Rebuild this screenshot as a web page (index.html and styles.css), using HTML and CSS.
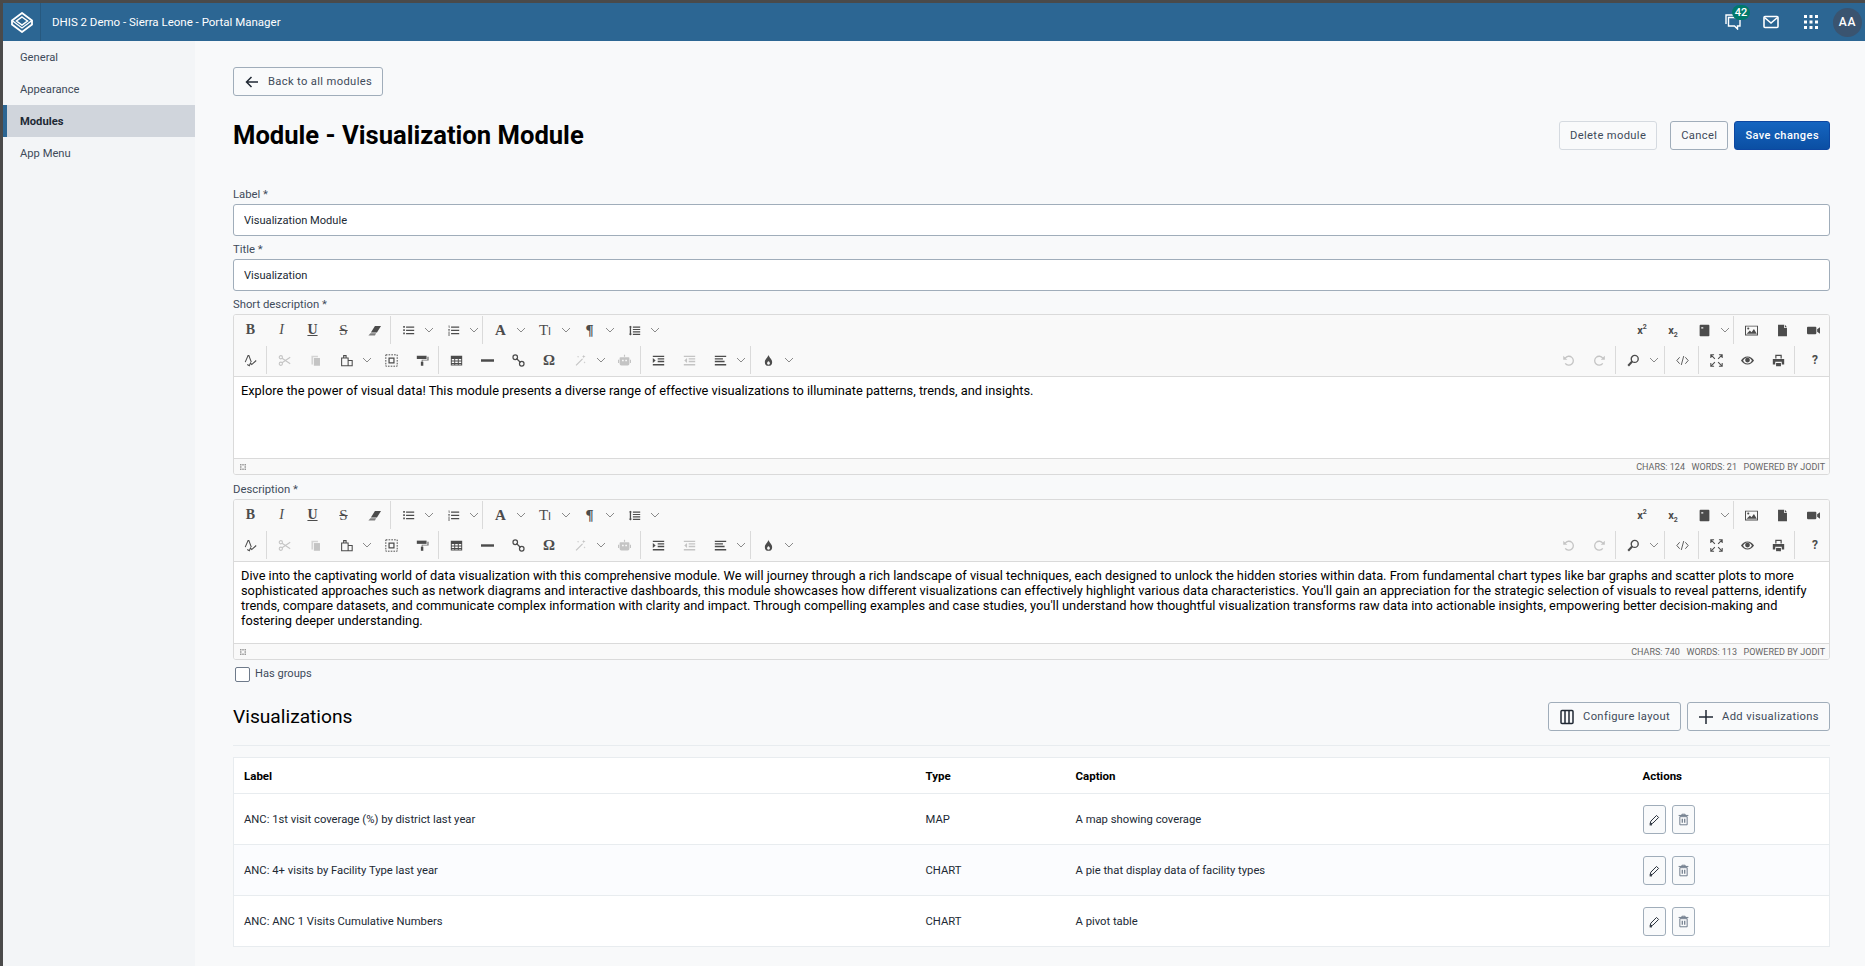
FILE: index.html
```html
<!DOCTYPE html>
<html lang="en">
<head>
  <meta charset="UTF-8"/>
  <meta name="viewport" content="width=device-width, initial-scale=1.0"/>
  <title>Portal Manager</title>
  <link rel="stylesheet" href="styles.css">
</head>
<body>

  <!-- icon sheet, everything below points here with <use> -->
  <svg class="sprite" width="0" height="0">
    <symbol id="i-chev" viewBox="0 0 10 10"><path d="M1 3l4 4 4-4" fill="none" stroke="currentColor" stroke-width="1"/></symbol>
    <symbol id="i-eraser" viewBox="0 0 16 16"><path d="M8.500 2.500H16l-5 8H3.500z"/><path d="M3 11.500h7l-1.500 2.500H.5z" opacity=".7"/></symbol>
    <symbol id="i-ul" viewBox="0 0 16 16"><path d="M5 3h10v1.500H5zM5 7h10v1.500H5zM5 11h10v1.500H5z"/><path d="M1.500 2.500h2v2h-2zM1.500 6.500h2v2h-2zM1.500 10.500h2v2h-2z"/></symbol>
    <symbol id="i-ol" viewBox="0 0 16 16"><path d="M5 3h10v1.500H5zM5 7h10v1.500H5zM5 11h10v1.500H5z"/><path d="M1.500 2h2v.8h-2zM2 3.500h1.500v.8H2zM1.500 6.500h2v.8h-2zM1.500 8h2v.8h-2zM1.500 10.500h2v.8h-2zM1.500 12h2v.8h-2zM1.500 13.500h2v.8h-2z"/></symbol>
    <symbol id="i-lines" viewBox="0 0 16 16"><path d="M6 3h9v1.500H6zM6 6h9v1.500H6zM6 9h9v1.500H6zM6 12h9v1.500H6z"/><path d="M2.200 3h1.600v10H2.200z"/><path d="M1 4l2-2 2 2zM1 12l2 2 2-2z"/></symbol>
    <symbol id="i-spell" viewBox="0 0 16 16"><path d="M1.500 10L5 2h1l3 8" fill="none" stroke="currentColor" stroke-width="1.300"/><path d="M4 13l2.500 1.500L8 11l1.500 2L15 8" fill="none" stroke="currentColor" stroke-width="1.300"/></symbol>
    <symbol id="i-cut" viewBox="0 0 16 16" fill="none" stroke="currentColor" stroke-width="1.300"><circle cx="3.500" cy="4" r="2"/><circle cx="3.500" cy="12" r="2"/><path d="M5 5.200L15 12M5 10.800L15 4"/></symbol>
    <symbol id="i-copy" viewBox="0 0 16 16"><path d="M3 2h8v2H5v9H3z" opacity=".7"/><path d="M6 5h7.500v9.500H6z"/></symbol>
    <symbol id="i-paste" viewBox="0 0 16 16" fill="none" stroke="currentColor" stroke-width="1.300"><path d="M2 5h8v9.500H2zM10 8h5v6.500h-5z"/><path d="M4.500 5V2h3v3"/></symbol>
    <symbol id="i-select" viewBox="0 0 16 16"><path d="M5 5h6v6H5z" fill="none" stroke="currentColor" stroke-width="1.500"/><path d="M1 1h14v14H1z" fill="none" stroke="currentColor" stroke-width="1.200" stroke-dasharray="2 1.400"/></symbol>
    <symbol id="i-paint" viewBox="0 0 16 16"><path d="M1 2h12v4H1z"/><path d="M14 3.500h1.500V8H8v2H7V7h7z" opacity=".8"/><path d="M6 9.500h3v5H6z"/></symbol>
    <symbol id="i-table" viewBox="0 0 16 16"><path d="M1 2h14v12H1zM2.200 6v2h3V6zm4.200 0v2h3.200V6zm4.400 0v2h3V6zM2.200 9.200v2h3v-2zm4.200 0v2h3.200v-2zm4.400 0v2h3v-2zM2.200 12.400v.6h3v-.6zm4.200 0v.6h3.200v-.6zm4.400 0v.6h3v-.6z" fill-rule="evenodd"/></symbol>
    <symbol id="i-hr" viewBox="0 0 16 16"><path d="M0 6.500h16v3H0z"/></symbol>
    <symbol id="i-link" viewBox="0 0 16 16" fill="none" stroke="currentColor" stroke-width="1.500"><circle cx="4" cy="4" r="2.800"/><circle cx="12" cy="12" r="2.800"/><path d="M5.500 5.500l5 5"/></symbol>
    <symbol id="i-wand" viewBox="0 0 16 16"><path d="M2 13.500l8-8 1 1-8 8z"/><path d="M12 1l.6 1.600 1.600.6-1.600.6L12 5.400l-.6-1.600-1.600-.6 1.600-.6zM5 2l.4 1 1 .4-1 .4-.4 1-.4-1-1-.4 1-.4zM13 9l.4 1 1 .4-1 .4-.4 1-.4-1-1-.4 1-.4z"/></symbol>
    <symbol id="i-robot" viewBox="0 0 16 16"><path d="M7.300 1h1.400v2.500H7.300z"/><path d="M3 4h10a1 1 0 0 1 1 1v7a2 2 0 0 1-2 2H4a2 2 0 0 1-2-2V5a1 1 0 0 1 1-1zm2 3v2h2V7zm4 0v2h2V7z" fill-rule="evenodd"/><path d="M0 7h1.400v4H0zM14.600 7H16v4h-1.400z"/></symbol>
    <symbol id="i-indent" viewBox="0 0 16 16"><path d="M1 2h14v1.600H1zM7 5.200h8v1.600H7zM7 8.400h8V10H7zM1 12.400h14V14H1z"/><path d="M1 5l3.500 3L1 11z"/></symbol>
    <symbol id="i-outdent" viewBox="0 0 16 16"><path d="M1 2h14v1.600H1zM7 5.200h8v1.600H7zM7 8.400h8V10H7zM1 12.400h14V14H1z"/><path d="M5 5L1.500 8 5 11z"/></symbol>
    <symbol id="i-align" viewBox="0 0 16 16"><path d="M1 2h14v1.600H1zM1 5.200h10v1.600H1zM1 8.400h12V10H1zM1 12.400h14V14H1z"/></symbol>
    <symbol id="i-drop" viewBox="0 0 16 16"><path d="M8 1c.5 3 4.500 5.500 4.500 9a4.500 4.500 0 0 1-9 0C3.500 6.500 7.500 4 8 1zM8 8.500c-1 1-1.800 2-1.800 3a1.800 1.800 0 0 0 3.600 0c0-1-.8-2-1.800-3z" fill-rule="evenodd"/></symbol>
    <symbol id="i-book" viewBox="0 0 16 16"><path d="M3 1h10a1 1 0 0 1 1 1v12a1 1 0 0 1-1 1H3a1 1 0 0 1-1-1V2a1 1 0 0 1 1-1zm1 3v1.500h2.500V4z" fill-rule="evenodd"/></symbol>
    <symbol id="i-image" viewBox="0 0 16 16"><path d="M0 2h16v12H0zm1.200 1.200v9.600h13.600V3.200z" fill-rule="evenodd"/><path d="M2 12l4-4 2 2 3-4 3.500 6z"/><circle cx="4" cy="5.500" r="1.300"/></symbol>
    <symbol id="i-file" viewBox="0 0 16 16"><path d="M2.500 1H10v4h3.500v10h-11zM11 1l2.500 3H11z"/></symbol>
    <symbol id="i-video" viewBox="0 0 16 16"><path d="M1 3.500h9.500a1 1 0 0 1 1 1v7a1 1 0 0 1-1 1H1a1 1 0 0 1-1-1v-7a1 1 0 0 1 1-1zM12.500 6.500L16 4v8l-3.500-2.500z"/></symbol>
    <symbol id="i-undo" viewBox="0 0 16 16"><path d="M4 5a5.500 5.500 0 1 1 0 6.500" fill="none" stroke="currentColor" stroke-width="1.600"/><path d="M1.500 2v5h5z"/></symbol>
    <symbol id="i-redo" viewBox="0 0 16 16"><path d="M12 5a5.500 5.500 0 1 0 0 6.500" fill="none" stroke="currentColor" stroke-width="1.600"/><path d="M14.500 2v5h-5z"/></symbol>
    <symbol id="i-search" viewBox="0 0 16 16" fill="none" stroke="currentColor"><circle cx="9.500" cy="6" r="4.300" stroke-width="1.700"/><path d="M6.300 9.200L1.500 14.500" stroke-width="2.500"/></symbol>
    <symbol id="i-code" viewBox="0 0 16 16" fill="none" stroke="currentColor" stroke-width="1.100"><path d="M4.500 4L1 8l3.500 4M11.500 4L15 8l-3.500 4M9.500 2.500l-3 11"/></symbol>
    <symbol id="i-expand" viewBox="0 0 16 16" fill="none" stroke="currentColor" stroke-width="1.300"><path d="M1 5V1h4M15 5V1h-4M1 11v4h4M15 11v4h-4M1.500 1.500l4.500 4.500M14.500 1.500L10 6M1.500 14.500L6 10M14.500 14.500L10 10"/></symbol>
    <symbol id="i-eye" viewBox="0 0 16 16"><path d="M8 3c3.500 0 6.500 2.500 8 5-1.500 2.500-4.500 5-8 5s-6.500-2.500-8-5c1.500-2.500 4.500-5 8-5zm0 1.200C5.500 4.200 3.500 6 2.600 8c.9 2 2.900 3.800 5.400 3.800S12.500 10 13.400 8C12.500 6 10.500 4.200 8 4.200z" fill-rule="evenodd"/><circle cx="8" cy="7.500" r="3"/></symbol>
    <symbol id="i-print" viewBox="0 0 16 16"><path d="M4 1h8v4.500h-1.500v-3h-5v3H4z"/><path d="M1 6h14v7h-3V9.500H4V13H1z"/><path d="M5 11h6v4H5z"/></symbol>
    <symbol id="i-pencil" viewBox="0 0 16 16" fill="none" stroke="currentColor" stroke-width="1.200"><path d="M3.500 10L10.500 3l2.500 2.500-7 7L2.500 13.500z"/><path d="M2 14.500h3" stroke-width="1.500"/></symbol>
    <symbol id="i-trash" viewBox="0 0 16 16" fill="none" stroke="currentColor" stroke-width="1.200"><path d="M3.500 4.500h9v10h-9zM2 3h12M6 3V1.500h4V3"/><path d="M6.500 7v5M9.500 7v5" stroke-width="1.500"/></symbol>
  </svg>

  <header class="topbar">
    <div class="logo">
      <svg width="22" height="21" viewBox="0 0 22 21" fill="none" stroke="#fff" stroke-width="1.800">
        <path d="M11 1l10 7.500v4L11 20 1 12.500v-4z"/>
        <path d="M11 5l5.500 4L11 13 5.500 9z" stroke-width="1.500"/>
        <path d="M1 8.500L11 16l10-7.500" stroke-width="1.300"/>
      </svg>
    </div>
    <div class="app-title">DHIS 2 Demo - Sierra Leone - Portal Manager</div>
    <div class="top-icons">
      <span class="top-icon msg">
        <svg width="16" height="16" viewBox="0 0 16 16" fill="none" stroke="#fff" stroke-width="1.400">
          <path d="M3.500 3.500H15v8.500h-2.500v3l-3-3h-6z"/>
          <path d="M1 10V1h10"/>
        </svg>
        <span class="badge">42</span>
      </span>
      <span class="top-icon mail">
        <svg width="16" height="14" viewBox="0 0 16 14" fill="none" stroke="#fff" stroke-width="1.600">
          <rect x="1" y="1.500" width="14" height="11" rx="1"/>
          <path d="M1.500 2.500L8 8l6.500-5.500"/>
        </svg>
      </span>
      <span class="top-icon apps">
        <svg width="14" height="14" viewBox="0 0 14 14" fill="#fff">
          <path d="M0 0h3v3H0zM5.500 0h3v3h-3zM11 0h3v3h-3zM0 5.500h3v3H0zM5.500 5.500h3v3h-3zM11 5.500h3v3h-3zM0 11h3v3H0zM5.500 11h3v3h-3zM11 11h3v3h-3z"/>
        </svg>
      </span>
      <span class="avatar">AA</span>
    </div>
  </header>

  <div class="layout">
    <nav class="sidebar">
      <a class="nav-item">General</a>
      <a class="nav-item">Appearance</a>
      <a class="nav-item active">Modules</a>
      <a class="nav-item">App Menu</a>
    </nav>

    <main class="content">
      <button class="btn back-btn">
        <svg width="16" height="16" viewBox="0 0 16 16" fill="none" stroke="currentColor" stroke-width="1.500"><path d="M14 8H2.500M7.500 3l-5 5 5 5"/></svg>
        Back to all modules
      </button>

      <div class="title-row">
        <h1>Module - Visualization Module</h1>
        <div class="title-actions">
          <button class="btn btn-muted">Delete module</button>
          <button class="btn cancel-btn">Cancel</button>
          <button class="btn btn-primary">Save changes</button>
        </div>
      </div>

      <div class="field">
        <label>Label *</label>
        <input class="text-input" type="text" value="Visualization Module"/>
      </div>
      <div class="field">
        <label>Title *</label>
        <input class="text-input" type="text" value="Visualization"/>
      </div>

      <div class="field field-editor">
        <label>Short description *</label>
        <div class="editor">
          <div class="toolbar">
            <div class="tb-row">
              <div class="tb-group">
                <span class="tb"><b class="g-serif">B</b></span>
                <span class="tb"><i class="g-serif">I</i></span>
                <span class="tb"><u class="g-serif g-bold">U</u></span>
                <span class="tb"><s class="g-serif g-big">S</s></span>
                <span class="tb"><svg class="ic"><use href="#i-eraser"/></svg></span>
              </div>
              <div class="tb-group">
                <span class="tb"><svg class="ic"><use href="#i-ul"/></svg></span><span class="tr"><svg><use href="#i-chev"/></svg></span>
                <span class="tb"><svg class="ic"><use href="#i-ol"/></svg></span><span class="tr"><svg><use href="#i-chev"/></svg></span>
              </div>
              <div class="tb-group last">
                <span class="tb"><b class="g-serif g-big">A</b></span><span class="tr"><svg><use href="#i-chev"/></svg></span>
                <span class="tb"><span class="g-serif g-big">T<small>I</small></span></span><span class="tr"><svg><use href="#i-chev"/></svg></span>
                <span class="tb"><b class="g-serif g-big">¶</b></span><span class="tr"><svg><use href="#i-chev"/></svg></span>
                <span class="tb"><svg class="ic"><use href="#i-lines"/></svg></span><span class="tr"><svg><use href="#i-chev"/></svg></span>
              </div>
              <div class="tb-group push">
                <span class="tb"><b class="g-sup">x<sup>2</sup></b></span>
                <span class="tb"><b class="g-sup">x<sub>2</sub></b></span>
                <span class="tb"><svg class="ic"><use href="#i-book"/></svg></span><span class="tr"><svg><use href="#i-chev"/></svg></span>
              </div>
              <div class="tb-group last">
                <span class="tb"><svg class="ic"><use href="#i-image"/></svg></span>
                <span class="tb"><svg class="ic"><use href="#i-file"/></svg></span>
                <span class="tb"><svg class="ic"><use href="#i-video"/></svg></span>
              </div>
            </div>
            <div class="tb-row">
              <div class="tb-group">
                <span class="tb"><svg class="ic"><use href="#i-spell"/></svg></span>
              </div>
              <div class="tb-group">
                <span class="tb off"><svg class="ic"><use href="#i-cut"/></svg></span>
                <span class="tb off"><svg class="ic"><use href="#i-copy"/></svg></span>
                <span class="tb"><svg class="ic"><use href="#i-paste"/></svg></span><span class="tr"><svg><use href="#i-chev"/></svg></span>
                <span class="tb"><svg class="ic"><use href="#i-select"/></svg></span>
                <span class="tb"><svg class="ic"><use href="#i-paint"/></svg></span>
              </div>
              <div class="tb-group">
                <span class="tb"><svg class="ic"><use href="#i-table"/></svg></span>
                <span class="tb"><svg class="ic"><use href="#i-hr"/></svg></span>
                <span class="tb"><svg class="ic"><use href="#i-link"/></svg></span>
                <span class="tb"><b class="g-serif g-big">Ω</b></span>
                <span class="tb off"><svg class="ic"><use href="#i-wand"/></svg></span><span class="tr"><svg><use href="#i-chev"/></svg></span>
                <span class="tb off"><svg class="ic"><use href="#i-robot"/></svg></span>
              </div>
              <div class="tb-group">
                <span class="tb"><svg class="ic"><use href="#i-indent"/></svg></span>
                <span class="tb off"><svg class="ic"><use href="#i-outdent"/></svg></span>
                <span class="tb"><svg class="ic"><use href="#i-align"/></svg></span><span class="tr"><svg><use href="#i-chev"/></svg></span>
              </div>
              <div class="tb-group last">
                <span class="tb"><svg class="ic"><use href="#i-drop"/></svg></span><span class="tr"><svg><use href="#i-chev"/></svg></span>
              </div>
              <div class="tb-group push">
                <span class="tb off"><svg class="ic"><use href="#i-undo"/></svg></span>
                <span class="tb off"><svg class="ic"><use href="#i-redo"/></svg></span>
              </div>
              <div class="tb-group find">
                <span class="tb"><svg class="ic"><use href="#i-search"/></svg></span><span class="tr"><svg><use href="#i-chev"/></svg></span>
              </div>
              <div class="tb-group">
                <span class="tb"><svg class="ic"><use href="#i-code"/></svg></span>
              </div>
              <div class="tb-group">
                <span class="tb"><svg class="ic"><use href="#i-expand"/></svg></span>
                <span class="tb"><svg class="ic"><use href="#i-eye"/></svg></span>
                <span class="tb"><svg class="ic"><use href="#i-print"/></svg></span>
              </div>
              <div class="tb-group last">
                <span class="tb"><b class="g-help">?</b></span>
              </div>
            </div>
          </div>
          <div class="editor-body">Explore the power of visual data! This module presents a diverse range of effective visualizations to illuminate patterns, trends, and insights.</div>
          <div class="status">
            <svg class="grip" width="6" height="6" viewBox="0 0 8 8" fill="#999"><path d="M0 0h2v2H0zM3 0h2v2H3zM6 0h2v2H6zM0 3h2v2H0zM6 3h2v2H6zM0 6h2v2H0zM3 6h2v2H3zM6 6h2v2H6z"/></svg>
            <span>Chars: 124</span><span>Words: 21</span><span>Powered by Jodit</span>
          </div>
        </div>
      </div>

      <div class="field field-editor">
        <label>Description *</label>
        <div class="editor">
          <div class="toolbar">
            <div class="tb-row">
              <div class="tb-group">
                <span class="tb"><b class="g-serif">B</b></span>
                <span class="tb"><i class="g-serif">I</i></span>
                <span class="tb"><u class="g-serif g-bold">U</u></span>
                <span class="tb"><s class="g-serif g-big">S</s></span>
                <span class="tb"><svg class="ic"><use href="#i-eraser"/></svg></span>
              </div>
              <div class="tb-group">
                <span class="tb"><svg class="ic"><use href="#i-ul"/></svg></span><span class="tr"><svg><use href="#i-chev"/></svg></span>
                <span class="tb"><svg class="ic"><use href="#i-ol"/></svg></span><span class="tr"><svg><use href="#i-chev"/></svg></span>
              </div>
              <div class="tb-group last">
                <span class="tb"><b class="g-serif g-big">A</b></span><span class="tr"><svg><use href="#i-chev"/></svg></span>
                <span class="tb"><span class="g-serif g-big">T<small>I</small></span></span><span class="tr"><svg><use href="#i-chev"/></svg></span>
                <span class="tb"><b class="g-serif g-big">¶</b></span><span class="tr"><svg><use href="#i-chev"/></svg></span>
                <span class="tb"><svg class="ic"><use href="#i-lines"/></svg></span><span class="tr"><svg><use href="#i-chev"/></svg></span>
              </div>
              <div class="tb-group push">
                <span class="tb"><b class="g-sup">x<sup>2</sup></b></span>
                <span class="tb"><b class="g-sup">x<sub>2</sub></b></span>
                <span class="tb"><svg class="ic"><use href="#i-book"/></svg></span><span class="tr"><svg><use href="#i-chev"/></svg></span>
              </div>
              <div class="tb-group last">
                <span class="tb"><svg class="ic"><use href="#i-image"/></svg></span>
                <span class="tb"><svg class="ic"><use href="#i-file"/></svg></span>
                <span class="tb"><svg class="ic"><use href="#i-video"/></svg></span>
              </div>
            </div>
            <div class="tb-row">
              <div class="tb-group">
                <span class="tb"><svg class="ic"><use href="#i-spell"/></svg></span>
              </div>
              <div class="tb-group">
                <span class="tb off"><svg class="ic"><use href="#i-cut"/></svg></span>
                <span class="tb off"><svg class="ic"><use href="#i-copy"/></svg></span>
                <span class="tb"><svg class="ic"><use href="#i-paste"/></svg></span><span class="tr"><svg><use href="#i-chev"/></svg></span>
                <span class="tb"><svg class="ic"><use href="#i-select"/></svg></span>
                <span class="tb"><svg class="ic"><use href="#i-paint"/></svg></span>
              </div>
              <div class="tb-group">
                <span class="tb"><svg class="ic"><use href="#i-table"/></svg></span>
                <span class="tb"><svg class="ic"><use href="#i-hr"/></svg></span>
                <span class="tb"><svg class="ic"><use href="#i-link"/></svg></span>
                <span class="tb"><b class="g-serif g-big">Ω</b></span>
                <span class="tb off"><svg class="ic"><use href="#i-wand"/></svg></span><span class="tr"><svg><use href="#i-chev"/></svg></span>
                <span class="tb off"><svg class="ic"><use href="#i-robot"/></svg></span>
              </div>
              <div class="tb-group">
                <span class="tb"><svg class="ic"><use href="#i-indent"/></svg></span>
                <span class="tb off"><svg class="ic"><use href="#i-outdent"/></svg></span>
                <span class="tb"><svg class="ic"><use href="#i-align"/></svg></span><span class="tr"><svg><use href="#i-chev"/></svg></span>
              </div>
              <div class="tb-group last">
                <span class="tb"><svg class="ic"><use href="#i-drop"/></svg></span><span class="tr"><svg><use href="#i-chev"/></svg></span>
              </div>
              <div class="tb-group push">
                <span class="tb off"><svg class="ic"><use href="#i-undo"/></svg></span>
                <span class="tb off"><svg class="ic"><use href="#i-redo"/></svg></span>
              </div>
              <div class="tb-group find">
                <span class="tb"><svg class="ic"><use href="#i-search"/></svg></span><span class="tr"><svg><use href="#i-chev"/></svg></span>
              </div>
              <div class="tb-group">
                <span class="tb"><svg class="ic"><use href="#i-code"/></svg></span>
              </div>
              <div class="tb-group">
                <span class="tb"><svg class="ic"><use href="#i-expand"/></svg></span>
                <span class="tb"><svg class="ic"><use href="#i-eye"/></svg></span>
                <span class="tb"><svg class="ic"><use href="#i-print"/></svg></span>
              </div>
              <div class="tb-group last">
                <span class="tb"><b class="g-help">?</b></span>
              </div>
            </div>
          </div>
          <div class="editor-body">Dive into the captivating world of data visualization with this comprehensive module. We will journey through a rich landscape of visual techniques, each designed to unlock the hidden stories within data. From fundamental chart types like bar graphs and scatter plots to more sophisticated approaches such as network diagrams and interactive dashboards, this module showcases how different visualizations can effectively highlight various data characteristics. You'll gain an appreciation for the strategic selection of visuals to reveal patterns, identify trends, compare datasets, and communicate complex information with clarity and impact. Through compelling examples and case studies, you'll understand how thoughtful visualization transforms raw data into actionable insights, empowering better decision-making and fostering deeper understanding.</div>
          <div class="status">
            <svg class="grip" width="6" height="6" viewBox="0 0 8 8" fill="#999"><path d="M0 0h2v2H0zM3 0h2v2H3zM6 0h2v2H6zM0 3h2v2H0zM6 3h2v2H6zM0 6h2v2H0zM3 6h2v2H3zM6 6h2v2H6z"/></svg>
            <span>Chars: 740</span><span>Words: 113</span><span>Powered by Jodit</span>
          </div>
        </div>
      </div>

      <label class="check-row">
        <span class="check-box"></span>
        Has groups
      </label>

      <div class="section-head">
        <h2>Visualizations</h2>
        <div class="section-actions">
          <button class="btn">
            <svg width="16" height="16" viewBox="0 0 16 16" fill="none" stroke="currentColor" stroke-width="1.500"><rect x="2" y="1.500" width="12" height="13" rx="1"/><path d="M6 1.500v13M10 1.500v13"/></svg>
            Configure layout
          </button>
          <button class="btn">
            <svg width="16" height="16" viewBox="0 0 16 16" fill="none" stroke="currentColor" stroke-width="1.500"><path d="M8 1v14M1 8h14"/></svg>
            Add visualizations
          </button>
        </div>
      </div>

      <table class="vis-table">
        <thead>
          <tr>
            <th class="col-label">Label</th>
            <th class="col-type">Type</th>
            <th class="col-caption">Caption</th>
            <th>Actions</th>
          </tr>
        </thead>
        <tbody>
          <tr>
            <td>ANC: 1st visit coverage (%) by district last year</td>
            <td>MAP</td>
            <td>A map showing coverage</td>
            <td class="row-actions">
              <button class="icon-btn edit"><svg width="13" height="13"><use href="#i-pencil"/></svg></button>
              <button class="icon-btn del"><svg width="13" height="13"><use href="#i-trash"/></svg></button>
            </td>
          </tr>
          <tr>
            <td>ANC: 4+ visits by Facility Type last year</td>
            <td>CHART</td>
            <td>A pie that display data of facility types</td>
            <td class="row-actions">
              <button class="icon-btn edit"><svg width="13" height="13"><use href="#i-pencil"/></svg></button>
              <button class="icon-btn del"><svg width="13" height="13"><use href="#i-trash"/></svg></button>
            </td>
          </tr>
          <tr>
            <td>ANC: ANC 1 Visits Cumulative Numbers</td>
            <td>CHART</td>
            <td>A pivot table</td>
            <td class="row-actions">
              <button class="icon-btn edit"><svg width="13" height="13"><use href="#i-pencil"/></svg></button>
              <button class="icon-btn del"><svg width="13" height="13"><use href="#i-trash"/></svg></button>
            </td>
          </tr>
        </tbody>
      </table>
    </main>
  </div>

</body>
</html>
```

FILE: styles.css
```css
* {
  margin: 0; padding: 0; box-sizing: border-box;
  font-family: Roboto, "Liberation Sans", sans-serif;
}
body {
  height: 966px;
  overflow: hidden;
  display: flex; flex-direction: column;
  background: #f8f9fa;
  border-top: 3px solid #4a4a4a;
  border-left: 3px solid #4a4a4a;
  color: #212934;
}
.sprite { position: absolute; }

/* top bar */
.topbar {
  height: 38px;
  flex: none;
  display: flex; align-items: center;
  background: #2c6693;
  color: #fff;
}
.logo {
  width: 38px; height: 38px;
  display: flex; align-items: center; justify-content: center;
  border-right: 1px solid #27597f;
}
.app-title {
  margin-left: 11px;
  font-size: 11.5px;
}
.top-icons {
  margin-left: auto;
  display: flex; align-items: center;
}
.top-icon { display: flex; align-items: center; justify-content: center; }
.msg { position: relative; margin-right: 22px; }
.mail { margin-right: 25px; }
.apps { margin-right: 15px; }
.badge {
  position: absolute; top: -9px; left: 7px;
  min-width: 18px; height: 15px;
  padding: 0 2px;
  background: #00796b;
  border-radius: 8px;
  font-size: 11px; font-weight: 500; line-height: 15px; text-align: center;
}
.avatar {
  width: 29px; height: 29px;
  display: flex; align-items: center; justify-content: center;
  background: #3a5470;
  border-radius: 50%;
  margin-right: 3px;
  font-size: 12px; font-weight: 500; letter-spacing: 0.8px;
}

/* sidebar + page */
.layout {
  flex: 1;
  display: flex;
  min-height: 0;
}
.sidebar {
  width: 192px; flex: none;
  background: #f3f5f7;
}
.nav-item {
  display: block;
  height: 32px;
  padding-left: 17px;
  font-size: 11.2px; line-height: 34px;
  color: #404b5a;
}
.nav-item.active {
  background: #d0d5dc;
  border-left: 4px solid #2c6693;
  padding-left: 13px;
  font-weight: 700;
  color: #212934;
}
.content {
  flex: 1;
  padding: 26px 35px 0 38px;
  min-width: 0;
}

/* buttons */
.btn {
  height: 29px;
  display: inline-flex; align-items: center; gap: 8px;
  padding: 0 10px;
  background: #f9fafb;
  border: 1px solid #a0adba;
  border-radius: 3px;
  color: #404b5a;
  font-size: 11.2px; font-weight: 400; letter-spacing: 0.35px;
}
.btn svg { color: #212934; }
.btn-muted {
  border-color: #d5dae0;
}
.btn-primary {
  background: linear-gradient(#1565c0, #0b4fa3);
  border-color: #0d47a1;
  color: #fff;
  font-weight: 500;
  font-size: 11px;
  letter-spacing: 0.45px;
}

.title-row {
  display: flex; align-items: center; justify-content: space-between;
  margin-top: 24px;
  margin-bottom: 38px;
}
h1 {
  font-size: 25.6px; font-weight: 700;
  color: #000;
}
.title-actions { display: flex; align-items: center; }
.btn-muted { margin-right: 13px; }
.cancel-btn { margin-right: 6px; }

/* form */
.field { margin-bottom: 7px; }
.field label {
  display: block;
  font-size: 11.3px; line-height: 14px;
  margin-bottom: 2px;
  color: #404b5a;
}
.text-input {
  display: block;
  width: 100%; height: 32px;
  padding: 0 10px;
  background: #fff;
  border: 1px solid #a0adba;
  border-radius: 3px;
  font-size: 11.1px;
  color: #212934;
}
.field-editor { margin-bottom: 8px; }

/* jodit look */
.editor {
  background: #fff;
  border: 1px solid #dadada;
  border-radius: 3px;
  overflow: hidden;
}
.toolbar {
  background: #f9f9f9;
  border-bottom: 1px solid #dadada;
  padding: 0 1px 1px;
}
.tb-row {
  display: flex; align-items: stretch;
  height: 30px;
  padding: 1px 0;
}
.tb-group {
  display: flex; align-items: center;
  border-right: 1px solid #dadada;
  margin-right: 2px;
}
.tb-group.last { border-right: none; margin-right: 0; }
.tb-group.push { margin-left: auto; }
.tb-group.find { padding-right: 2px; }
.tb-row:first-child .tb-group.last { margin-right: -1px; }
.tb {
  width: 31px; height: 28px;
  display: flex; align-items: center; justify-content: center;
  color: #4c4c4c;
}
.tb.off { color: #c4c4c4; }
.tr {
  width: 13.5px; height: 28px;
  display: flex; align-items: center;
  color: #8a8a8a;
}
.tr svg { width: 10px; height: 10px; }
.ic { width: 13px; height: 13px; fill: currentColor; }
.g-serif {
  font-family: "Liberation Serif", serif;
  font-size: 14px; line-height: 1;
  color: #4c4c4c;
}
.g-big { font-size: 15px; }
.g-bold { font-weight: 700; }
.g-serif small { font-size: 11px; }
.g-sup {
  font-size: 11px; line-height: 1;
  color: #4c4c4c;
}
.g-sup sup, .g-sup sub { font-size: 7px; line-height: 0; }
.g-help {
  margin-left: 5px;
  font-size: 12px; line-height: 1;
  color: #4c4c4c;
}
.editor-body {
  height: 81px;
  padding: 6px 7px;
  font-size: 12.8px; line-height: 15px;
  color: #000;
}
.status {
  height: 16px;
  display: flex; align-items: center; justify-content: flex-end; gap: 6.5px;
  padding: 0 4px;
  background: #f9f9f9;
  border-top: 1px solid #dadada;
  font-size: 9px;
  color: #666;
  text-transform: uppercase;
}
.grip { margin-right: auto; margin-left: 2px; }

.check-row {
  display: flex; align-items: center; gap: 5px;
  margin-top: -2px;
  margin-left: 2px;
  font-size: 11.1px; line-height: 16px;
  color: #404b5a;
}
.check-box {
  width: 15px; height: 15px;
  background: #fff;
  border: 1px solid #6e7a8a;
  border-radius: 2px;
}

.section-head {
  display: flex; align-items: center; justify-content: space-between;
  height: 58px;
  padding-top: 12px;
  padding-bottom: 12px;
  margin-top: 6px;
  margin-bottom: 11px;
  border-bottom: 1px solid #e8ecef;
}
h2 {
  font-size: 19.2px; font-weight: 400;
  color: #000;
}
.section-actions { display: flex; gap: 6px; }

/* table */
.vis-table {
  width: 100%;
  table-layout: fixed;
  border-collapse: collapse;
  background: #fff;
  border: 1px solid #e8ecef;
  font-size: 11.25px;
}
.vis-table th {
  height: 36px;
  padding: 0 10px;
  text-align: left;
  font-size: 11.5px;
  font-weight: 700;
  color: #000;
}
.vis-table td {
  height: 51px;
  padding: 0 10px;
  border-top: 1px solid #e8ecef;
  color: #212934;
}
.vis-table tbody tr:nth-child(2) { background: #fbfcfe; }
.col-label { width: 682px; }
.col-type { width: 150px; }
.col-caption { width: 567px; }
.row-actions { font-size: 0; }
.icon-btn {
  width: 23px; height: 29px;
  display: inline-flex; align-items: center; justify-content: center;
  background: #f9fafb;
  border: 1px solid #a0adba;
  border-radius: 3px;
  color: #212934;
}
.icon-btn.edit { margin-right: 6px; }
.icon-btn.del { color: #6e7a8a; }
.icon-btn svg { width: 13px; height: 13px; }
```
